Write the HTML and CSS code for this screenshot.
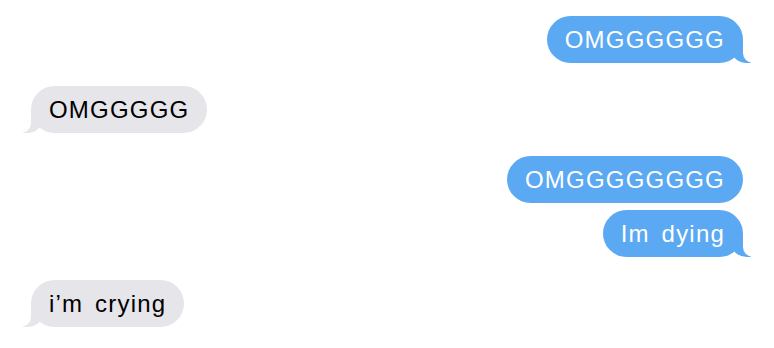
FILE: index.html
```html
<!DOCTYPE html>
<html lang="en">
<head>
    <meta charset="UTF-8">
    <title>Messages</title>
    <link rel="stylesheet" href="styles.css">
</head>
<body>
    <div class="chat">
        <div class="group">
            <div class="bubble sent tail">OMGGGGGG</div>
        </div>
        <div class="group">
            <div class="bubble received tail">OMGGGGG</div>
        </div>
        <div class="group">
            <div class="bubble sent">OMGGGGGGGG</div>
            <div class="bubble sent tail">Im dying</div>
        </div>
        <div class="group">
            <div class="bubble received tail">i’m crying</div>
        </div>
    </div>
</body>
</html>
```

FILE: styles.css
```css
body {
    margin: 0;
    padding: 0;
    background-color: #fff;
    font-family: 'Liberation Sans', Arial, sans-serif;
}

.chat {
    display: flex;
    flex-direction: column;
    gap: 23px;
    padding: 16px 31px;
}

.group {
    display: flex;
    flex-direction: column;
    gap: 7px;
}

.bubble {
    position: relative;
    font-size: 24px;
    letter-spacing: 1.2px;
    word-spacing: 4px;
    line-height: 27px;
    padding: 10px 18px;
    border-radius: 24px;
    max-width: 70%;
}

.sent {
    align-self: flex-end;
    background-color: #5ba9f2;
    color: #fff;
}

.received {
    align-self: flex-start;
    background-color: #e5e5ea;
    color: #000;
}

/* the little tails */
.sent.tail::before {
    content: "";
    position: absolute;
    bottom: 0;
    right: -8px;
    width: 20px;
    height: 22px;
    background-color: #5ba9f2;
    border-bottom-left-radius: 16px 14px;
}

.sent.tail::after {
    content: "";
    position: absolute;
    bottom: 0;
    right: -10px;
    width: 10px;
    height: 22px;
    background-color: #fff;
    border-bottom-left-radius: 10px;
}

.received.tail::before {
    content: "";
    position: absolute;
    bottom: 0;
    left: -8px;
    width: 20px;
    height: 22px;
    background-color: #e5e5ea;
    border-bottom-right-radius: 16px 14px;
}

.received.tail::after {
    content: "";
    position: absolute;
    bottom: 0;
    left: -10px;
    width: 10px;
    height: 22px;
    background-color: #fff;
    border-bottom-right-radius: 10px;
}
```
